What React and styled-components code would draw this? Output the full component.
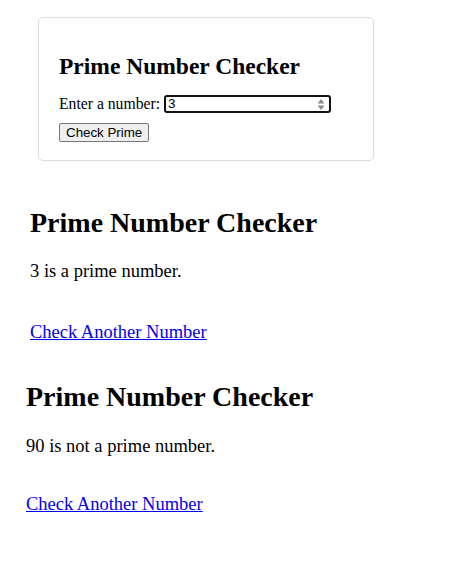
import React from "react";
import styled, { createGlobalStyle } from "styled-components";

const GlobalStyle = createGlobalStyle`
  body {
    margin: 0;
    background: #fff;
    font-family: "Liberation Serif", "Times New Roman", serif;
    color: #000;
  }
`;

const Page = styled.div`
  padding: 17px 0 40px;
`;

const Card = styled.div`
  box-sizing: border-box;
  width: 336px;
  margin-left: 38px;
  padding: 13px 20px 18px;
  border: 1px solid #dcdcdc;
  border-radius: 5px;
  font-size: 16px;
`;

const CardTitle = styled.h2`
  margin: 22px 0 14px;
  font-size: 23.5px;
  font-weight: bold;
`;

const FormRow = styled.form`
  display: flex;
  flex-direction: column;
  align-items: flex-start;
  gap: 10px;
`;

const Field = styled.label`
  display: flex;
  align-items: center;
  gap: 4px;
  height: 19px;
  font-size: 15.7px;
`;

const InputWrap = styled.span`
  position: relative;
  display: inline-flex;
`;

const NumberInput = styled.input`
  box-sizing: border-box;
  width: 167px;
  height: 18px;
  padding: 0 2px;
  border: 2px solid #111;
  border-radius: 3px;
  font-family: "Liberation Sans", Arial, sans-serif;
  font-size: 13.33px;
  color: #000;
  outline: none;
  -moz-appearance: textfield;
  &::-webkit-inner-spin-button,
  &::-webkit-outer-spin-button {
    -webkit-appearance: none;
    margin: 0;
  }
`;

const Spinner = styled.svg`
  position: absolute;
  right: 6px;
  top: 3px;
  pointer-events: none;
`;

const Button = styled.button`
  box-sizing: border-box;
  height: 19px;
  padding: 0 6px;
  background: #efefef;
  border: 1px solid #767676;
  border-radius: 2px;
  font-family: "Liberation Sans", Arial, sans-serif;
  font-size: 13.33px;
  color: #000;
`;

const Result = styled.section`
  margin-left: ${(p) => p.$indent}px;
  margin-top: ${(p) => p.$top}px;
  font-size: 18.5px;
`;

const ResultTitle = styled.h1`
  margin: 0 0 ${(p) => p.$gap}px;
  font-size: 28px;
  font-weight: bold;
`;

const Message = styled.p`
  margin: 0 0 ${(p) => p.$gap}px;
`;

const BackLink = styled.a`
  color: #0000ee;
  text-decoration: underline;
`;

const results = [
  { text: "3 is a prime number.", indent: 30, top: 46, titleGap: 22, gap: 40 },
  { text: "90 is not a prime number.", indent: 26, top: 38, titleGap: 23, gap: 37 },
];

const App = () => {
  return (
    <Page>
      <GlobalStyle />
      <Card>
        <CardTitle>Prime Number Checker</CardTitle>
        <FormRow onSubmit={(e) => e.preventDefault()}>
          <Field>
            Enter a number:
            <InputWrap>
              <NumberInput type="number" defaultValue="3" />
              <Spinner width="8" height="13" viewBox="0 0 8 13">
                <path d="M4 1 L7.5 5.5 L0.5 5.5 Z" fill="#8a8a8a" />
                <path d="M4 12 L7.5 7.5 L0.5 7.5 Z" fill="#8a8a8a" />
              </Spinner>
            </InputWrap>
          </Field>
          <Button type="submit">Check Prime</Button>
        </FormRow>
      </Card>
      {results.map((r) => (
        <Result key={r.text} $indent={r.indent} $top={r.top}>
          <ResultTitle $gap={r.titleGap}>Prime Number Checker</ResultTitle>
          <Message $gap={r.gap}>{r.text}</Message>
          <BackLink href="#">Check Another Number</BackLink>
        </Result>
      ))}
    </Page>
  );
};

export default App;
